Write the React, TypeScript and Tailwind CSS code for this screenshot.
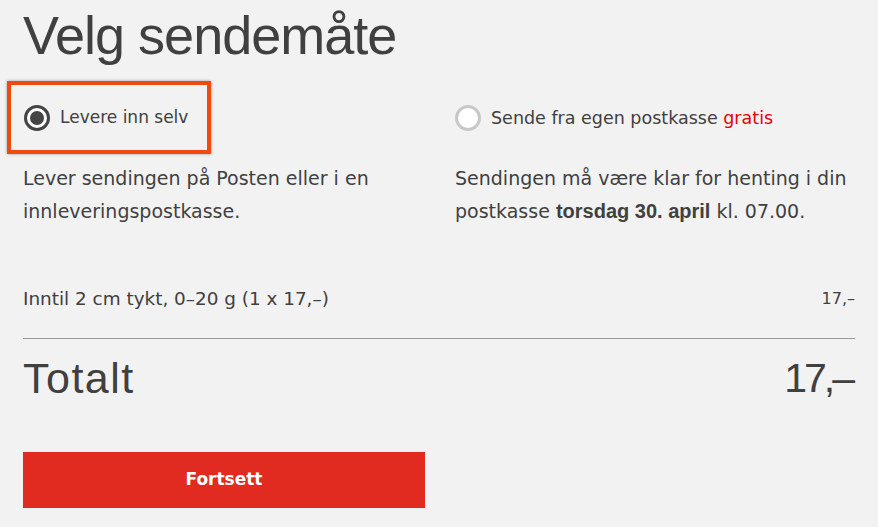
import React from "react";

function Radio({ checked }: { checked: boolean }) {
  return checked ? (
    <span className="flex size-[26px] shrink-0 items-center justify-center rounded-full border-[3px] border-[#444] bg-white">
      <span className="size-[14px] rounded-full bg-[#444]" />
    </span>
  ) : (
    <span className="size-[26px] shrink-0 rounded-full border-[3px] border-[#c8c8c8] bg-white" />
  );
}

const arial = { fontFamily: '"Liberation Sans", Arial, sans-serif' };

export default function App() {
  return (
    <div
      className="h-[527px] w-[878px] overflow-hidden bg-[#f2f2f2] px-[23px] text-[#404040]"
      style={{ fontFamily: '"DejaVu Sans", Verdana, sans-serif' }}
    >
      <h1 className="pt-[3px] text-[54px] leading-[64px] tracking-[-1px]" style={arial}>
        Velg sendemåte
      </h1>

      <div className="mt-[31px] grid grid-cols-2 gap-8">
        <div>
          <div className="relative flex h-[40px] items-center gap-[10px] pl-[1px]">
            <div className="absolute -left-[16px] -top-[17px] h-[73px] w-[204px] border-[4px] border-[#f2490f] shadow-[0_0_3px_rgba(0,0,0,0.35)]" />
            <Radio checked />
            <span className="text-[17px]">Levere inn selv</span>
          </div>
          <p className="mt-[24px] text-[19px] leading-[33px]">
            Lever sendingen på Posten eller i en innleveringspostkasse.
          </p>
        </div>
        <div>
          <div className="flex h-[40px] items-center gap-[10px]">
            <Radio checked={false} />
            <span className="text-[17.5px]">
              Sende fra egen postkasse <span className="text-[#e60000]">gratis</span>
            </span>
          </div>
          <p className="mt-[24px] text-[19px] leading-[33px]">
            Sendingen må være klar for henting i din postkasse{" "}
            <b className="text-[20px] leading-[33px] font-bold" style={arial}>
              torsdag 30. april
            </b>{" "}
            kl. 07.00.
          </p>
        </div>
      </div>

      <div className="mt-[56px] flex items-center justify-between text-[18.4px] leading-[30px]">
        <span>Inntil 2 cm tykt, 0–20 g (1 x 17,–)</span>
        <span className="text-[16px]">17,–</span>
      </div>

      <div className="mt-[24px] border-t border-[#999]" />

      <div className="mt-[14px] flex items-center justify-between text-[43px] leading-[50px]" style={arial}>
        <span className="tracking-[1.5px]">Totalt</span>
        <span className="mr-[3px] text-[41px] tracking-[-3px]">17,–</span>
      </div>

      <button className="mt-[49px] flex h-[56px] w-[402px] items-center justify-center bg-[#e12b20] text-[17px] font-bold text-white">
        Fortsett
      </button>
    </div>
  );
}
